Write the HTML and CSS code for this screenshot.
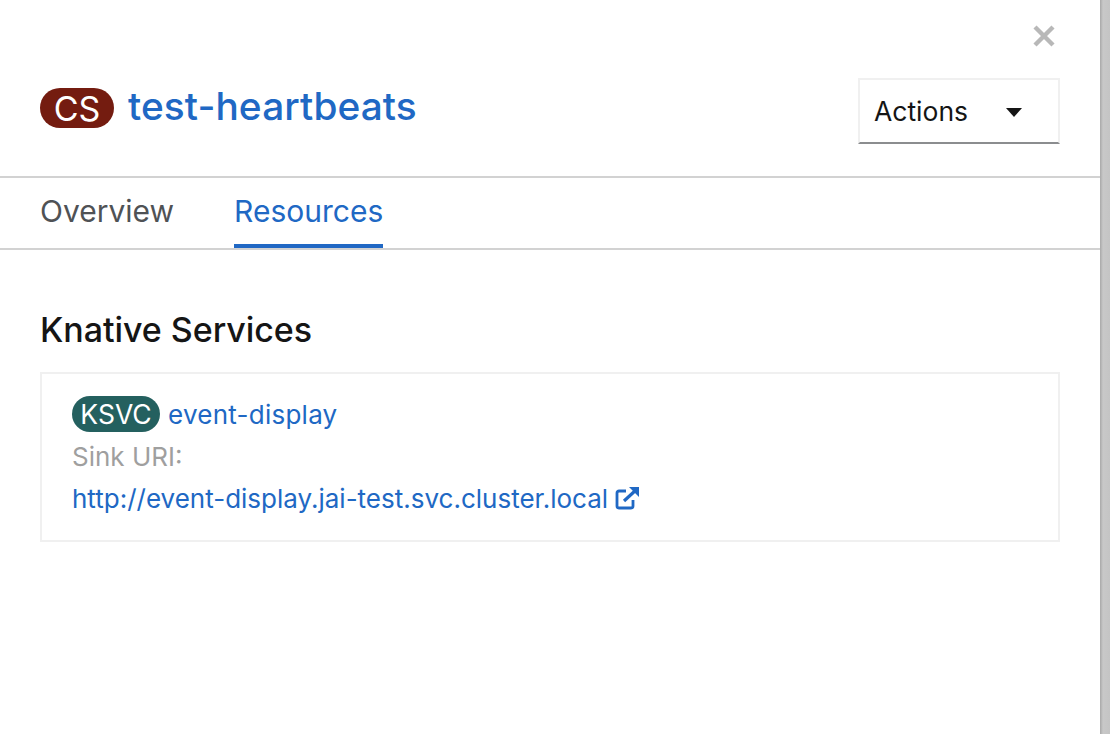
FILE: index.html
```html
<!DOCTYPE html>
<html lang="en">
<head>
<meta charset="utf-8">
<title>test-heartbeats</title>
<link rel="stylesheet" href="styles.css">
</head>
<body>
<div class="sidebar">
  <main class="panel">
    <div class="close-row">
      <svg class="close" viewBox="0 0 24 24" aria-label="Close"><path d="M3 3 L21 21 M21 3 L3 21"/></svg>
    </div>
    <header class="head">
      <h1 class="title"><span class="badge badge-cs">CS</span><a class="title-link">test-heartbeats</a></h1>
      <button class="actions"><span>Actions</span><svg class="caret" viewBox="0 0 16 10"><path d="M0 0 H16 L8 9 Z"/></svg></button>
    </header>
    <nav class="tabs">
      <a class="tab">Overview</a>
      <a class="tab tab-active">Resources</a>
    </nav>
    <section class="content">
      <h2 class="section-title">Knative Services</h2>
      <div class="card">
        <div class="line"><span class="badge badge-ksvc">KSVC</span><a class="link link-name">event-display</a></div>
        <div class="line muted">Sink URI:</div>
        <div class="line"><a class="link">http://event-display.jai-test.svc.cluster.local</a><svg class="ext" viewBox="0 0 24 24"><path class="ext-box" d="M11 5 H4 a2 2 0 0 0 -2 2 V20 a2 2 0 0 0 2 2 H16 a2 2 0 0 0 2 -2 V14"/><path class="ext-arrow" d="M9 15 L21 4"/><path class="ext-head" d="M14 1 H24 V11 Z"/></svg></div>
      </div>
    </section>
  </main>
  <div class="scrollbar"></div>
</div>
</body>
</html>
```
FILE: styles.css
```css
* { box-sizing: border-box; }
html, body { margin: 0; height: 100%; background: #fff; overflow: hidden; }
body { font-family: Inter, "Open Sans", sans-serif; color: #151515; }
.sidebar { display: flex; height: 734px; }
.panel { flex: 1; min-width: 0; }
.scrollbar { width: 10px; background: linear-gradient(90deg, #a8a8a8, #c8c8c8 30%, #c4c4c4); }
.close-row { display: flex; justify-content: flex-end; padding: 24px 44px 0 0; height: 48px; }
.close { width: 24px; height: 24px; }
.close path { stroke: #b8b8b8; stroke-width: 4.4; fill: none; }
.head { display: flex; justify-content: space-between; align-items: center; height: 130px; padding: 0 40px 2px; border-bottom: 2px solid #d2d2d2; }
.title { display: flex; align-items: center; gap: 14px; margin: 0 0 6px; font-weight: 500; font-size: 38.8px; font-family: Inter, sans-serif; }
.title-link { color: #2068c4; padding-bottom: 6px; letter-spacing: .1px; }
.badge { display: inline-flex; align-items: center; justify-content: center; color: #fff; border-radius: 20px; font-family: Inter, sans-serif; font-weight: 400; }
.badge-cs { background: #741c10; width: 74px; height: 40px; font-size: 34px; }
.badge-ksvc { background: #24605f; width: 88px; height: 36px; font-size: 26.5px; margin-right: 8px; }
.actions { display: flex; align-items: center; justify-content: space-between; width: 202px; height: 66px; padding: 0 36px 0 14px; background: #fff; border: 2px solid #f0f0f0; border-bottom-color: #8b8d8f; font: 400 26.5px Inter, sans-serif; color: #151515; }
.caret { width: 16px; height: 10px; margin-top: 4px; fill: #151515; }
.tabs { display: flex; gap: 60px; padding: 0 40px; height: 72px; border-bottom: 2px solid #d2d2d2; }
.tab { display: flex; align-items: center; height: 70px; padding-bottom: 4px; font-size: 30px; color: #4f5255; }
.tab-active { color: #2068c4; border-bottom: 4px solid #2068c4; padding-bottom: 0; }
.content { padding: 56px 40px 0; }
.section-title { margin: 0 0 18px; font: 500 34px/48px Inter, sans-serif; color: #151515; letter-spacing: -.05px; }
.card { border: 2px solid #f0f0f0; padding: 19px 30px; height: 170px; }
.line { display: flex; align-items: center; height: 42px; font-size: 26px; }
.link { color: #2068c4; }
.link-name { letter-spacing: .25px; }
.muted { color: #9f9f9f; }
.ext { width: 24px; height: 24px; margin-left: 7px; }
.ext-box { fill: none; stroke: #2068c4; stroke-width: 2.8; }
.ext-arrow { stroke: #2068c4; stroke-width: 3.2; fill: none; }
.ext-head { fill: #2068c4; }
```
